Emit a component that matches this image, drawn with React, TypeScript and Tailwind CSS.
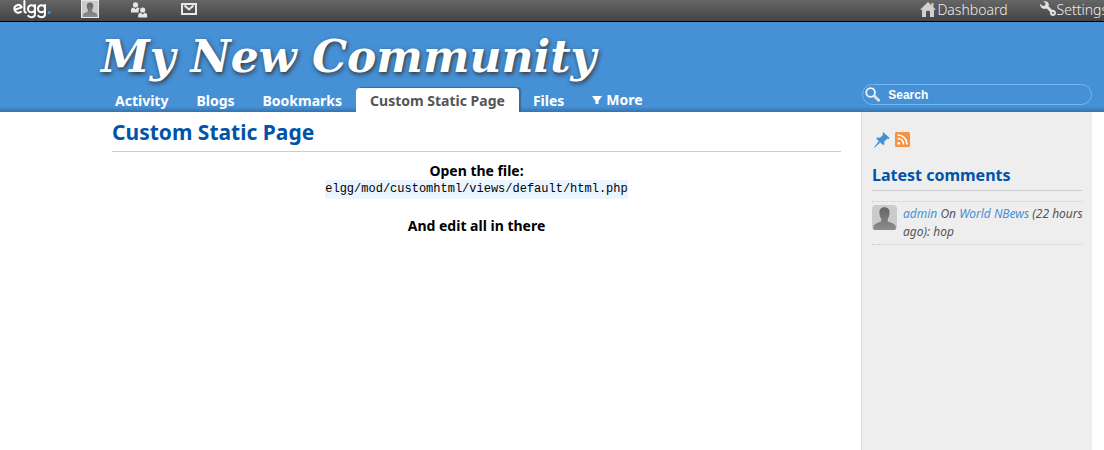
import React from "react";

const navLinks = ["Activity", "Blogs", "Bookmarks"];

function Avatar({ className }: { className: string }) {
  return (
    <svg viewBox="0 0 25 25" className={className} aria-hidden="true">
      <defs>
        <linearGradient id="person" x1="0" y1="0" x2="0" y2="1">
          <stop offset="0" stopColor="#666" />
          <stop offset="1" stopColor="#8c8c8c" />
        </linearGradient>
      </defs>
      <rect width="25" height="25" fill="#cbcbcb" />
      <path
        d="M12.500 2.200c3.300 0 5.200 2.200 5.100 5.300 0 2.700-.7 4.800-1.800 6.200v2.600c1.500 1.300 5.300 1.700 6.700 3.200 1.200 1.100 1.600 3.200 1.700 5.500H1c.1-2.300.5-4.400 1.700-5.500 1.500-1.500 5-1.900 6.500-3.200v-2.600c-1.100-1.400-1.800-3.500-1.800-6.200-.1-3.100 1.800-5.300 5.100-5.300z"
        fill="url(#person)"
      />
    </svg>
  );
}

function ElggLogo() {
  return (
    <svg viewBox="0 0 40 20" className="h-5 w-10" fill="none" stroke="#fff" strokeWidth="2" strokeLinecap="round" aria-hidden="true">
      <path d="M2.500 9.500 8.600 7.400C7.800 5.300 5.900 4.500 4 5.200 1.900 6 1 8 1.600 10.100c.7 2.400 3.800 3.400 6.300 1.700" />
      <path d="M11.400 1v9.500c0 1.300.5 1.900 1.500 1.900" />
      <circle cx="18.500" cy="8.700" r="3.500" />
      <path d="M22 5v8.500c0 2.600-1.300 3.800-3.500 3.800-1.500 0-2.500-.5-3.200-1.400" />
      <circle cx="28.500" cy="8.700" r="3.500" />
      <path d="M32 5v8.500c0 2.600-1.300 3.800-3.500 3.800-1.500 0-2.500-.5-3.200-1.400" />
      <circle cx="36.200" cy="12.500" r="1.400" fill="#1fa5e6" stroke="none" />
    </svg>
  );
}

function FriendsIcon() {
  return (
    <svg viewBox="0 0 17 16" className="h-4 w-[17px]" fill="#e6e6e6" aria-hidden="true">
      <circle cx="4.500" cy="2.800" r="2.600" />
      <path d="M0 10.500V8.200c0-1.500 1.200-2.600 2.700-2.600l1.800 1.700 1.800-1.700c1 0 1.700.5 2.200 1.200-.9.900-1.200 2.200-.8 3.700z" />
      <circle cx="11.700" cy="8" r="2.600" />
      <path d="M7.200 15.600v-2.300c0-1.500 1.200-2.600 2.700-2.600l1.800 1.700 1.800-1.700c1.500 0 2.700 1.100 2.700 2.600v2.300z" />
    </svg>
  );
}

function MailIcon() {
  return (
    <svg viewBox="0 0 16 12" className="h-3 w-4" fill="none" stroke="#e8e8e8" strokeWidth="2" aria-hidden="true">
      <path d="M1 1h14v10H1zM3.500 2.500 8 6.500l4.500-4" />
    </svg>
  );
}

function HomeIcon() {
  return (
    <svg viewBox="0 0 16 15" className="h-[15px] w-4" fill="#d0d0d0" aria-hidden="true">
      <path d="M8 0 0 7.700h2V15h4v-4.500c0-1.200.8-2 2-2s2 .8 2 2V15h4V7.700h2L13.500 5.300V1h-2v2.300z" />
    </svg>
  );
}

function WrenchIcon() {
  return (
    <svg viewBox="0 0 16 16" className="size-4" fill="#e2e2e2" aria-hidden="true">
      <path d="M3.200.4c2.300-.7 4.700.1 5.400 2.200.3.900.2 1.800-.1 2.600l3.400 3.600c1.100-.3 2.300 0 3.200.9 1.100 1.200 1.200 3.200.1 4.400-1.200 1.200-3.100 1.200-4.300.1-.9-.9-1.100-2-.8-3.100L6.600 7.500C4.600 8.300 2.400 7.800 1.100 6.200.1 5 0 3.700.3 2.700L2.600 5l2.500-.5.5-2.200z" />
      <circle cx="13" cy="12" r="1" fill="#555" />
    </svg>
  );
}

function SearchIcon() {
  return (
    <svg viewBox="0 0 17 17" className="size-[17px]" fill="none" aria-hidden="true">
      <path d="m10.500 10.500 4.600 4.300" stroke="#e3e3e3" strokeWidth="3.200" strokeLinecap="round" />
      <circle cx="6.300" cy="6.300" r="4.900" stroke="#f3f3f3" strokeWidth="2" />
    </svg>
  );
}

function PinIcon() {
  return (
    <svg viewBox="0 0 16 16" className="size-4" fill="#4690d6" aria-hidden="true">
      <path d="M9.300.3 15.700 6l-1 .9-1.500-.2-3 3.100.2 2.500-1.100 1-3-2.900L.4 15.700 0 15.300l4.800-6L2.200 6.500l1-1 2.800.2 3-3L8.400 1.200z" />
    </svg>
  );
}

function RssIcon() {
  return (
    <svg viewBox="0 0 15 15" className="size-[15px]" aria-hidden="true">
      <rect width="15" height="15" rx="1.500" fill="#f8903e" />
      <circle cx="3.700" cy="11.300" r="1.400" fill="#fff" />
      <path d="M2.500 6.500c3.500 0 6 2.500 6 6M2.500 3c5.500 0 9.500 4 9.500 9.500" fill="none" stroke="#fff" strokeWidth="1.700" />
    </svg>
  );
}

export default function App() {
  return (
    <div className="min-h-screen overflow-x-hidden bg-white font-['Noto_Sans','Open_Sans',sans-serif] text-black">
      <div className="flex h-[22px] items-start justify-between border-b border-black bg-linear-to-b from-[#666] to-[#444] text-[#eee]">
        <div className="flex items-start pl-[13px]">
          <a href="#elgg" aria-label="elgg" className="w-[68px]"><ElggLogo /></a>
          <a href="#profile" aria-label="Profile" className="w-[50px]">
            <Avatar className="size-[18px] border border-[#e8e8e8]" />
          </a>
          <a href="#friends" aria-label="Friends" className="w-[50px] pt-[2px]"><FriendsIcon /></a>
          <a href="#messages" aria-label="Messages" className="pt-[3px]"><MailIcon /></a>
        </div>
        <div className="-mr-1 flex gap-8 text-[14px] leading-[19px] font-light">
          <a href="#dashboard" className="flex gap-px"><span className="pt-[2px]"><HomeIcon /></span>Dashboard</a>
          <a href="#settings" className="flex gap-px"><span className="pt-px"><WrenchIcon /></span>Settings</a>
        </div>
      </div>

      <header className="bg-[linear-gradient(#4690d6_94%,#3873ab)] pr-3 pl-[101px]">
        <h1 className="h-[62px] pt-1 font-['DejaVu_Serif',serif] text-[44px] leading-[62px] font-bold text-white italic [text-shadow:1px_2px_4px_#333]">
          <a href="#home">My New Community</a>
        </h1>
        <div className="flex items-end justify-between">
          <nav className="flex h-6 text-[14px] leading-[26px] font-bold text-white">
            {navLinks.map((label) => (
              <a key={label} href={"#" + label} className="px-[14px]">{label}</a>
            ))}
            <a href="#page" className="rounded-t bg-white px-[14px] text-[#555] shadow-[2px_-1px_1px_rgba(0,0,0,0.25)]">Custom Static Page</a>
            <a href="#files" className="px-[14px]">Files</a>
            <a href="#more" className="flex items-center gap-1 px-[14px]">
              <svg viewBox="0 0 10 8" className="h-2 w-[10px]" fill="#fff" aria-hidden="true"><path d="M0 0h10L6.500 5v3h-3V5z" /></svg>
              More
            </a>
          </nav>
          <label className="mb-[7px] flex h-[21px] w-[230px] items-center gap-2 rounded-full border border-[#71b9f7] pl-[2px]">
            <SearchIcon />
            <input aria-label="Search" defaultValue="Search" className="w-full bg-transparent font-['Liberation_Sans',sans-serif] text-[12px] font-bold text-white outline-none" />
          </label>
        </div>
      </header>

      <div className="flex min-h-[338px] pr-3 pl-28">
        <main className="mr-5 flex-1">
          <h2 className="mb-[9px] border-b border-[#ccc] pt-[6px] pb-[5px] text-[21px] leading-7 font-bold text-[#0054a7]">Custom Static Page</h2>
          <div className="text-center text-[14px] leading-[19px] font-bold">
            <p>Open the file:</p>
            <code className="mx-auto block w-fit bg-[#ebf5ff] font-['Liberation_Mono',monospace] text-[12px] font-normal">elgg/mod/customhtml/views/default/html.php</code>
            <p className="mt-[17px]">And edit all in there</p>
          </div>
        </main>
        <aside className="w-[231px] border-l border-[#ddd] bg-[#eee] px-[10px] pt-5">
          <div className="flex gap-[5px] pl-[2px]">
            <a href="#bookmark" aria-label="Bookmark this"><PinIcon /></a>
            <a href="#rss" aria-label="RSS feed"><RssIcon /></a>
          </div>
          <h3 className="mt-4 border-b border-[#ccc] pb-1 text-[16px] leading-[22px] font-bold text-[#0054a7]">Latest comments</h3>
          <div className="mt-[10px] flex gap-[6px] border-y border-dotted border-[#ccc] py-[3px]">
            <Avatar className="size-[25px] shrink-0 rounded-sm" />
            <p className="-mr-2 text-[12px] leading-[18px] text-[#555] italic">
              <a href="#admin" className="text-[#4690d6]">admin</a> On <a href="#news" className="text-[#4690d6]">World NBews</a> (22 hours ago): hop
            </p>
          </div>
        </aside>
      </div>
    </div>
  );
}
